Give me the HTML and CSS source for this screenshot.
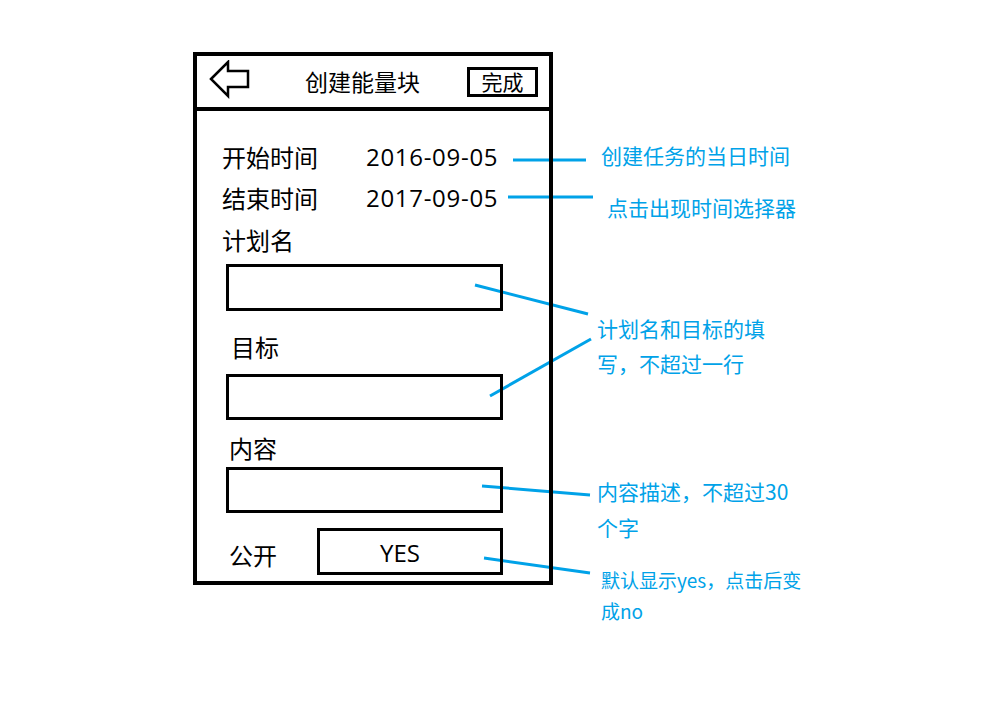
FILE: index.html
```html
<!DOCTYPE html>
<html lang="zh-CN">
<head>
    <meta charset="UTF-8">
    <title>创建能量块</title>
    <link rel="stylesheet" href="styles.css">
</head>
<body>
    <div class="canvas">
        <!-- annotation leader lines, drawn under the wireframe -->
        <svg class="leaders" width="1000" height="720" viewBox="0 0 1000 720">
            <line x1="513" y1="160" x2="586" y2="160"/>
            <line x1="508" y1="197" x2="593" y2="197"/>
            <line x1="475" y1="285" x2="588" y2="314"/>
            <line x1="490" y1="396" x2="591" y2="339"/>
            <line x1="482" y1="486" x2="590" y2="495"/>
            <line x1="484" y1="558" x2="590" y2="573"/>
        </svg>

        <div class="phone">
            <div class="header">
                <svg class="back" width="42" height="40" viewBox="0 0 42 40">
                    <polygon points="2,19 19,2 19,11 39,11 39,27 19,27 19,36"/>
                </svg>
                <div class="title">创建能量块</div>
                <div class="done">完成</div>
            </div>

            <div class="body">
                <div class="row first">
                    <span class="label">开始时间</span>
                    <span class="date">2016-09-05</span>
                </div>
                <div class="row">
                    <span class="label">结束时间</span>
                    <span class="date">2017-09-05</span>
                </div>
                <div class="row field-label">计划名</div>
                <div class="input"></div>

                <div class="row field-label indent goal">目标</div>
                <div class="input"></div>

                <div class="row field-label indent content">内容</div>
                <div class="input short-gap"></div>

                <div class="public">
                    <span class="label">公开</span>
                    <div class="toggle">YES</div>
                </div>
            </div>
        </div>

        <div class="note n1">创建任务的当日时间</div>
        <div class="note n2">点击出现时间选择器</div>
        <div class="note n3">计划名和目标的填<br>写，不超过一行</div>
        <div class="note n4">内容描述，不超过30<br>个字</div>
        <div class="note n5">默认显示yes，点击后变<br>成no</div>
    </div>
</body>
</html>
```

FILE: styles.css
```css
body {
    margin: 0;
    background: #fff;
    font-family: "Noto Sans CJK SC", sans-serif;
    color: #000;
}
.canvas {
    position: relative;
    width: 1000px;
    height: 720px;
    padding: 52px 0 0 193px;
    box-sizing: border-box;
}
.leaders {
    position: absolute;
    left: 0;
    top: 0;
}
.leaders line {
    stroke: #00a2e8;
    stroke-width: 3;
}
.phone {
    position: relative;
    z-index: 1;
    width: 360px;
    height: 533px;
    box-sizing: border-box;
    border: 4px solid #000;
}
.header {
    display: flex;
    align-items: center;
    height: 51px;
    border-bottom: 4px solid #000;
    padding: 0 11px 0 12px;
}
.back {
    display: block;
    margin-top: -4px;
}
.back polygon {
    fill: none;
    stroke: #000;
    stroke-width: 2.5;
    stroke-linejoin: miter;
}
.title {
    margin-left: 54px;
    font-size: 23px;
    line-height: 30px;
    margin-top: -2px;
}
.done {
    margin-left: auto;
    width: 71px;
    height: 30px;
    box-sizing: border-box;
    border: 3px solid #000;
    font-size: 21px;
    line-height: 23px;
    text-align: center;
}
.body {
    padding: 31px 0 0 25px;
}
.row {
    display: flex;
    height: 30px;
    line-height: 30px;
    font-size: 24px;
    margin-top: 11px;
}
.row.first {
    margin-top: 0;
}
.label {
    width: 144px;
    font-size: 24px;
}
.date {
    font-family: "Open Sans", sans-serif;
    font-size: 24px;
    letter-spacing: 0.7px;
}
.field-label {
    margin-top: 12px;
}
.indent {
    padding-left: 9px;
}
.goal {
    margin-top: 21px;
}
.content {
    margin-top: 13px;
    padding-left: 7px;
}
.input {
    width: 277px;
    height: 47px;
    box-sizing: border-box;
    border: 3px solid #000;
    margin: 9px 0 0 4px;
}
.goal + .input {
    margin-top: 12px;
    height: 46px;
}
.input.short-gap {
    margin-top: 4px;
    height: 46px;
}
.public {
    display: flex;
    align-items: center;
    margin-top: 15px;
    padding-left: 7px;
}
.public .label {
    width: 88px;
    margin-top: 6px;
}
.toggle {
    width: 186px;
    height: 47px;
    box-sizing: border-box;
    border: 3px solid #000;
    padding-right: 20px;
    text-align: center;
    font-family: "Open Sans", sans-serif;
    font-size: 24px;
    line-height: 43px;
}
.note {
    position: absolute;
    color: #00a2e8;
    font-size: 21px;
    line-height: 35px;
    white-space: nowrap;
}
.n1 { left: 601px; top: 138px; }
.n2 { left: 607px; top: 190px; }
.n3 { left: 597px; top: 311px; }
.n4 { left: 597px; top: 473px; line-height: 36px; }
.n5 { left: 601px; top: 564px; font-size: 19px; line-height: 31px; }
```
